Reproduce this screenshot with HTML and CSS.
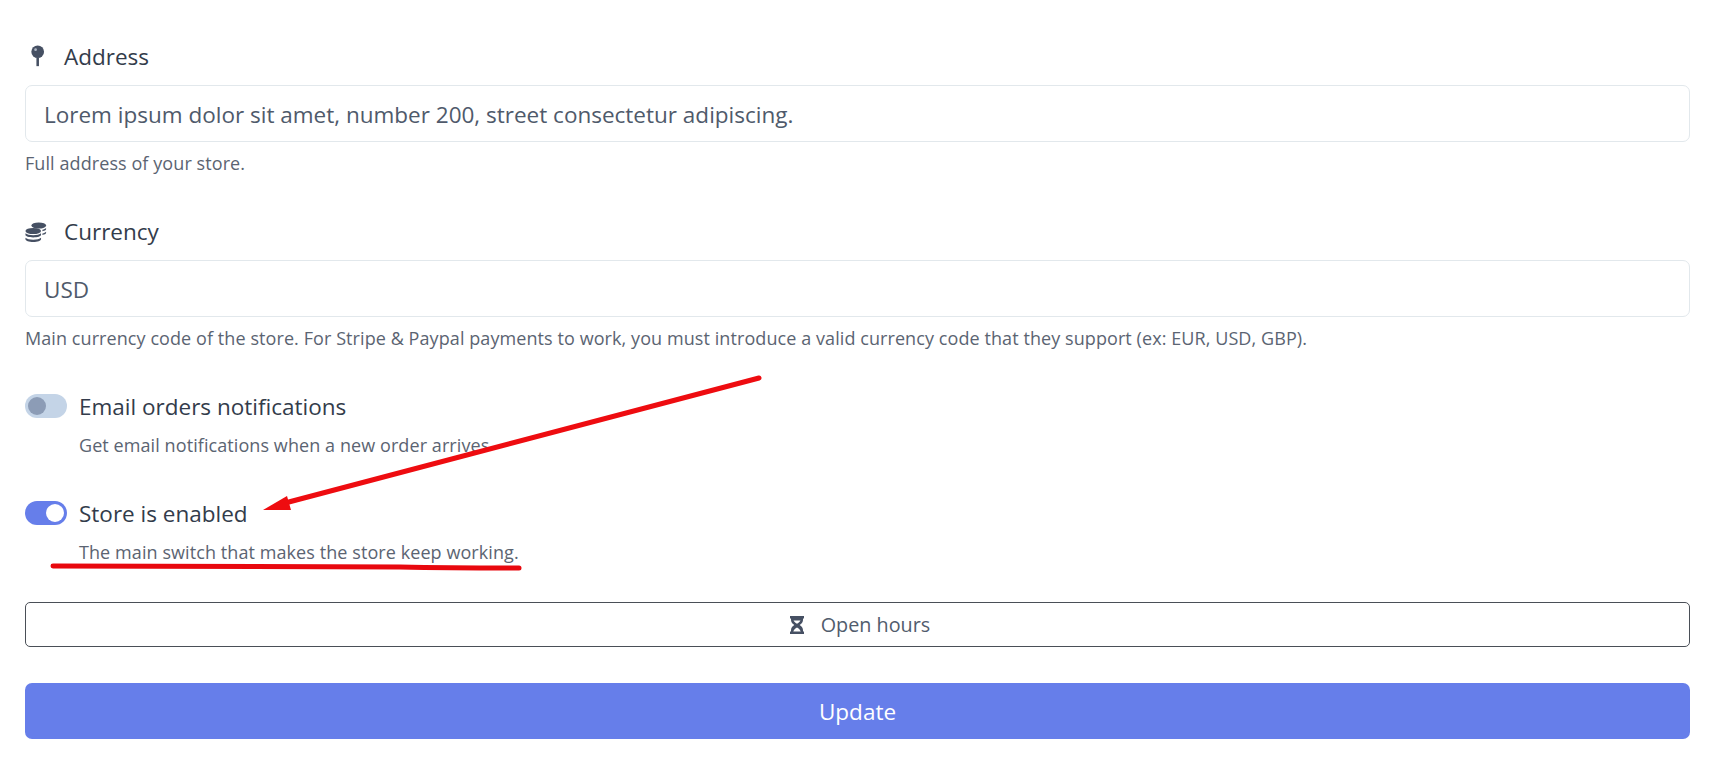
FILE: index.html
```html
<!DOCTYPE html>
<html lang="en">
<head>
    <meta charset="UTF-8">
    <meta name="viewport" content="width=device-width, initial-scale=1.0">
    <title>Store settings</title>
    <link rel="stylesheet" href="styles.css">
</head>
<body>

    <form class="settings-form">

        <!-- Address -->
        <div class="form-group">
            <label class="form-label" for="address">
                <svg class="label-icon" viewBox="-2 0 20 26"><circle cx="10" cy="8" r="7.5" fill="#465063"/><circle cx="7.5" cy="5.5" r="1.6" fill="#aeb6c4"/><rect x="8.5" y="15" width="3" height="10" fill="#465063"/></svg>
                <span>Address</span>
            </label>
            <input class="input-field" id="address" type="text" value="Lorem ipsum dolor sit amet, number 200, street consectetur adipiscing.">
            <p class="form-help">Full address of your store.</p>
        </div>

        <!-- Currency -->
        <div class="form-group">
            <label class="form-label" for="currency">
                <svg class="label-icon" viewBox="0 -1 24 22"><g fill="#465063"><ellipse cx="15" cy="4" rx="8" ry="3.4"/><path d="M19 8.6c1.700-.4 3.200-1 4-1.900v1.500c0 .9-1.600 1.700-4 2.200zM19 12.600c1.700-.4 3.200-1 4-1.900v1.500c0 .9-1.600 1.700-4 2.200z"/><ellipse cx="9" cy="10" rx="8.500" ry="3.400"/><path d="M.5 12.400c1.400 1.300 4.700 2.200 8.500 2.200s7.100-.9 8.500-2.200v2c0 1.300-3.800 2.600-8.500 2.600S.5 15.700.5 14.400zM.5 17.400c1.400 1.300 4.700 2.200 8.500 2.200s7.100-.9 8.500-2.200v1.600c0 1.600-3.800 3-8.500 3s-8.500-1.400-8.500-3z"/></g></svg>
                <span>Currency</span>
            </label>
            <input class="input-field" id="currency" type="text" value="USD">
            <p class="form-help">Main currency code of the store. For Stripe &amp; Paypal payments to work, you must introduce a valid currency code that they support (ex: EUR, USD, GBP).</p>
        </div>

        <!-- Switches -->
        <div class="switch-group">
            <label class="switch-row">
                <input class="switch" type="checkbox">
                <span>Email orders notifications</span>
            </label>
            <p class="form-help switch-help">Get email notifications when a new order arrives</p>
        </div>

        <div class="switch-group">
            <label class="switch-row">
                <input class="switch" type="checkbox" checked>
                <span>Store is enabled</span>
            </label>
            <p class="form-help switch-help">The main switch that makes the store keep working.</p>
        </div>

        <!-- Buttons -->
        <button type="button" class="hours-btn">
            <svg class="btn-icon" viewBox="0 0 14 18"><path fill="#465063" d="M0 0h14v2.500h-1v1.500c0 2.200-1.600 3.900-3.300 5 1.700 1.100 3.300 2.800 3.300 5v1.500h1V18H0v-2.500h1V14c0-2.200 1.600-3.900 3.300-5C2.600 7.900 1 6.200 1 4V2.500H0zM3.500 4.500h7c-.4 1-1.700 2.200-3.500 3.200-1.800-1-3.100-2.200-3.500-3.200zM3.300 15.500c.3-1.500 2-3 3.700-4 1.700 1 3.400 2.500 3.700 4z" fill-rule="evenodd"/></svg>
            <span>Open hours</span>
        </button>
        <button type="submit" class="update-btn">Update</button>

    </form>

    <!-- Red markup drawn over the page -->
    <svg class="markup" viewBox="0 0 1728 766">
        <path d="M759 378 L285 503" stroke="#ee0c10" stroke-width="5" stroke-linecap="round" fill="none"/>
        <path d="M263 510 L287 496 L291 510 Z" fill="#ee0c10"/>
        <path d="M53 566 C200 567 300 566 400 567 C450 568 490 568 519 568" stroke="#e8080e" stroke-width="5" stroke-linecap="round" fill="none"/>
    </svg>

</body>
</html>
```

FILE: styles.css
```css
/* Reset */
* {
    margin: 0;
    padding: 0;
    box-sizing: border-box;
    font-family: 'Open Sans', sans-serif;
}

body {
    background: #fff;
    position: relative;
}

.settings-form {
    display: flex;
    flex-direction: column;
    padding: 41px 38px 26px 25px;
}

/* Fields */
.form-group {
    margin-bottom: 41px;
}

.form-label {
    display: flex;
    align-items: center;
    height: 30px;
    margin-bottom: 14px;
    font-size: 22.5px;
    color: #333c4b;
}

.label-icon {
    width: 22px;
    height: 22px;
    margin-right: 17px;
}

.input-field {
    display: block;
    width: 100%;
    height: 57px;
    padding: 2px 18px 0;
    border: 1px solid #e2e8ec;
    border-radius: 7px;
    background: #fff;
    font-size: 22.5px;
    color: #4f5a6b;
}

.form-help {
    margin-top: 9px;
    font-size: 18px;
    letter-spacing: 0.08px;
    line-height: 24px;
    color: #5b6472;
}

/* Switches */
.switch-group {
    margin-bottom: 41px;
}

.switch-row {
    display: flex;
    align-items: center;
    gap: 12px;
    height: 30px;
    font-size: 22.5px;
    color: #333c4b;
}

.switch {
    appearance: none;
    display: flex;
    align-items: center;
    width: 42px;
    height: 24px;
    padding: 3px;
    border-radius: 12px;
    background: #c4d4e7;
}

.switch::before {
    content: "";
    width: 18px;
    height: 18px;
    border-radius: 50%;
    background: #8c9cb6;
}

.switch:checked {
    justify-content: flex-end;
    background: #667eea;
}

.switch:checked::before {
    background: #fff;
}

.switch-help {
    margin-top: 12px;
    margin-left: 54px;
}

/* Buttons */
.hours-btn {
    display: flex;
    align-items: center;
    justify-content: center;
    gap: 17px;
    height: 45px;
    margin-top: -3px;
    padding-left: 5px;
    border: 1px solid #4a4f57;
    border-radius: 5px;
    background: #fff;
    font-size: 19.8px;
    color: #515c6d;
}

.btn-icon {
    width: 14px;
    height: 18px;
}

.update-btn {
    height: 56px;
    margin-top: 36px;
    border: none;
    border-radius: 7px;
    background: #667eea;
    font-size: 22.5px;
    font-weight: 500;
    color: #fff;
}

/* Markup */
.markup {
    position: absolute;
    top: 0;
    left: 0;
    width: 1728px;
    height: 766px;
    pointer-events: none;
}
```
